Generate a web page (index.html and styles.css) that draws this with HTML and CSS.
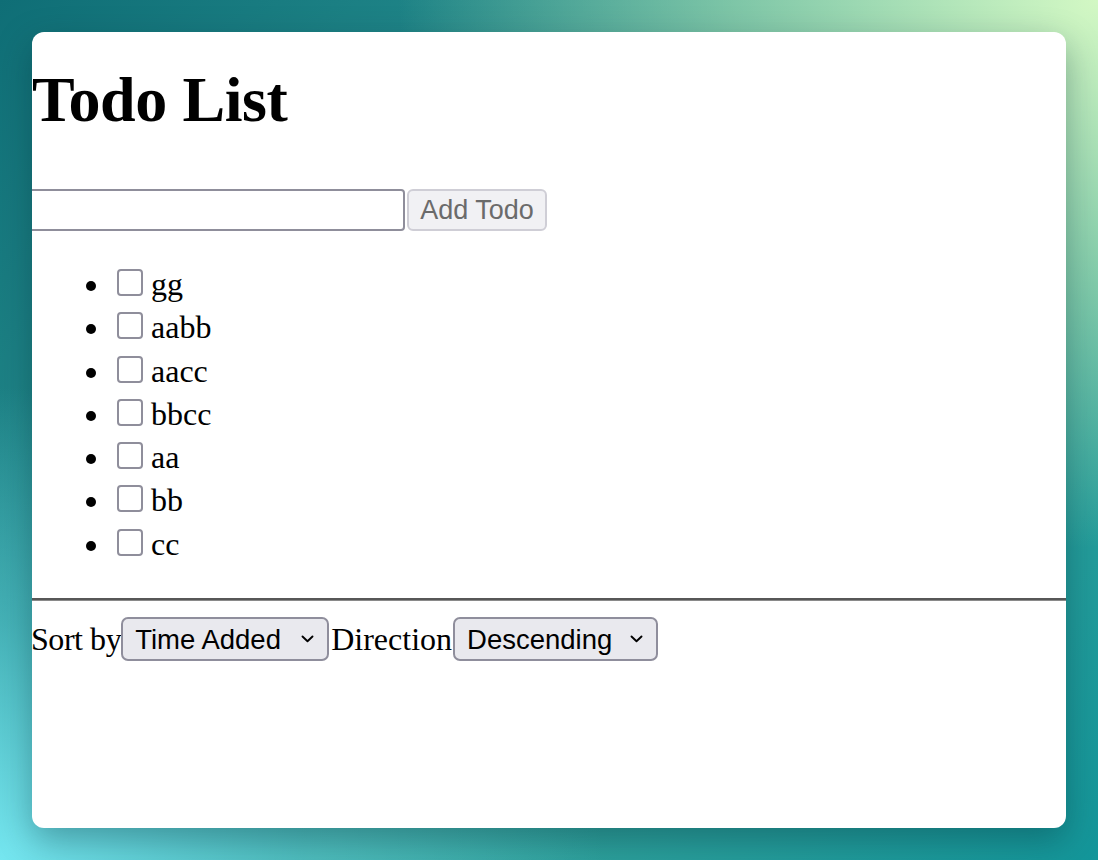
FILE: index.html
```html
<!DOCTYPE html>
<html>
<head>
<meta charset="utf-8">
<title>Todo List</title>
<link rel="stylesheet" href="styles.css">
</head>
<body>
<div class="card">
  <h1 class="title">Todo List</h1>
  <form class="add-form">
    <input class="todo-input" type="text">
    <button class="add-btn" type="button">Add Todo</button>
  </form>
  <ul class="todo-list">
    <li class="todo-item"><input class="todo-check" type="checkbox"><span class="todo-text">gg</span></li>
    <li class="todo-item"><input class="todo-check" type="checkbox"><span class="todo-text">aabb</span></li>
    <li class="todo-item"><input class="todo-check" type="checkbox"><span class="todo-text">aacc</span></li>
    <li class="todo-item"><input class="todo-check" type="checkbox"><span class="todo-text">bbcc</span></li>
    <li class="todo-item"><input class="todo-check" type="checkbox"><span class="todo-text">aa</span></li>
    <li class="todo-item"><input class="todo-check" type="checkbox"><span class="todo-text">bb</span></li>
    <li class="todo-item"><input class="todo-check" type="checkbox"><span class="todo-text">cc</span></li>
  </ul>
  <hr class="divider">
  <div class="sort-row">
    <span class="sort-label label-sort">Sort by</span>
    <span class="select-wrap select-sort">
      <select class="select"><option>Time Added</option></select>
      <svg class="chevron" width="13" height="8" viewBox="0 0 13 8"><path d="M1.5 1.5 L6.5 6.2 L11.5 1.5" fill="none" stroke="#000" stroke-width="1.9" stroke-linecap="round" stroke-linejoin="round"/></svg>
    </span>
    <span class="sort-label">Direction</span>
    <span class="select-wrap select-dir">
      <select class="select"><option>Descending</option></select>
      <svg class="chevron" width="13" height="8" viewBox="0 0 13 8"><path d="M1.5 1.5 L6.5 6.2 L11.5 1.5" fill="none" stroke="#000" stroke-width="1.9" stroke-linecap="round" stroke-linejoin="round"/></svg>
    </span>
  </div>
</div>
</body>
</html>
```
FILE: styles.css
```css
html, body {
  margin: 0;
  padding: 0;
}
body {
  width: 1098px;
  height: 860px;
  overflow: hidden;
  font-family: "Liberation Serif", "Times New Roman", serif;
  background:
    radial-gradient(ellipse 75% 75% at 100% 0%, #d3f8c4 0%, rgba(180,230,180,0.6) 45%, rgba(150,210,170,0) 85%),
    radial-gradient(ellipse 55% 55% at 0% 100%, #75e6f0 0%, rgba(100,215,225,0.5) 50%, rgba(90,200,210,0) 100%),
    linear-gradient(135deg, #0f6e76 0%, #2e9a98 45%, #3aa59c 60%, #13969a 100%);
  display: flow-root;
}
.card {
  display: flow-root;
  margin: 32px;
  width: 1034px;
  height: 796px;
  background: #fff;
  border-radius: 12px;
  overflow: hidden;
  box-shadow: 0 12px 34px rgba(0, 40, 50, 0.35);
}
.title {
  font-size: 64px;
  font-weight: bold;
  line-height: 74px;
  letter-spacing: -0.4px;
  margin: 31px 0 52px 0;
}
.add-form {
  display: flex;
  gap: 2px;
  margin: 0;
}
.todo-input {
  box-sizing: border-box;
  width: 385px;
  height: 42px;
  margin: 0 0 0 -12px;
  border: 2px solid #8f8e9b;
  border-radius: 4px;
  background: #fff;
  padding: 0 4px;
}
.add-btn {
  box-sizing: border-box;
  width: 140px;
  height: 42px;
  margin: 0;
  padding: 0;
  border: 2px solid #cfced6;
  border-radius: 6px;
  background: #f1f1f4;
  color: #6b6b6b;
  font-family: "Liberation Sans", Arial, sans-serif;
  font-size: 27px;
}
.todo-list {
  margin: 32px 0;
  padding-left: 80px;
  font-size: 32px;
}
.todo-item {
  line-height: 43.3px;
  height: 43.3px;
}
.todo-check {
  appearance: none;
  -webkit-appearance: none;
  box-sizing: border-box;
  width: 26px;
  height: 27px;
  margin: 0 8px 0 5px;
  border: 2px solid #8f8e9b;
  border-radius: 4px;
  background: #fff;
  vertical-align: -1px;
}
.divider {
  margin: 0 0 16px 0;
  height: 0;
  border: none;
  border-top: 2px solid #575757;
  border-bottom: 1.5px solid #8a8a8a;
}
.sort-row {
  display: flex;
  align-items: center;
  font-size: 32px;
}
.sort-label {
  line-height: 44px;
}
.label-sort {
  margin-left: -1px;
  letter-spacing: -0.45px;
}
.select-wrap {
  position: relative;
  display: inline-block;
  height: 44px;
}
.select-sort {
  width: 208px;
  margin-left: 0;
  margin-right: 2px;
}
.select-dir {
  width: 205px;
  margin-left: 1px;
}
.select {
  appearance: none;
  -webkit-appearance: none;
  box-sizing: border-box;
  width: 100%;
  height: 44px;
  margin: 0;
  padding: 0 0 0 12px;
  border: 2px solid #8f8e9c;
  border-radius: 7px;
  background: #e9e9ee;
  color: #000;
  font-family: "Liberation Sans", Arial, sans-serif;
  font-size: 27.5px;
}
.chevron {
  position: absolute;
  right: 15px;
  top: 18px;
  pointer-events: none;
}
```
